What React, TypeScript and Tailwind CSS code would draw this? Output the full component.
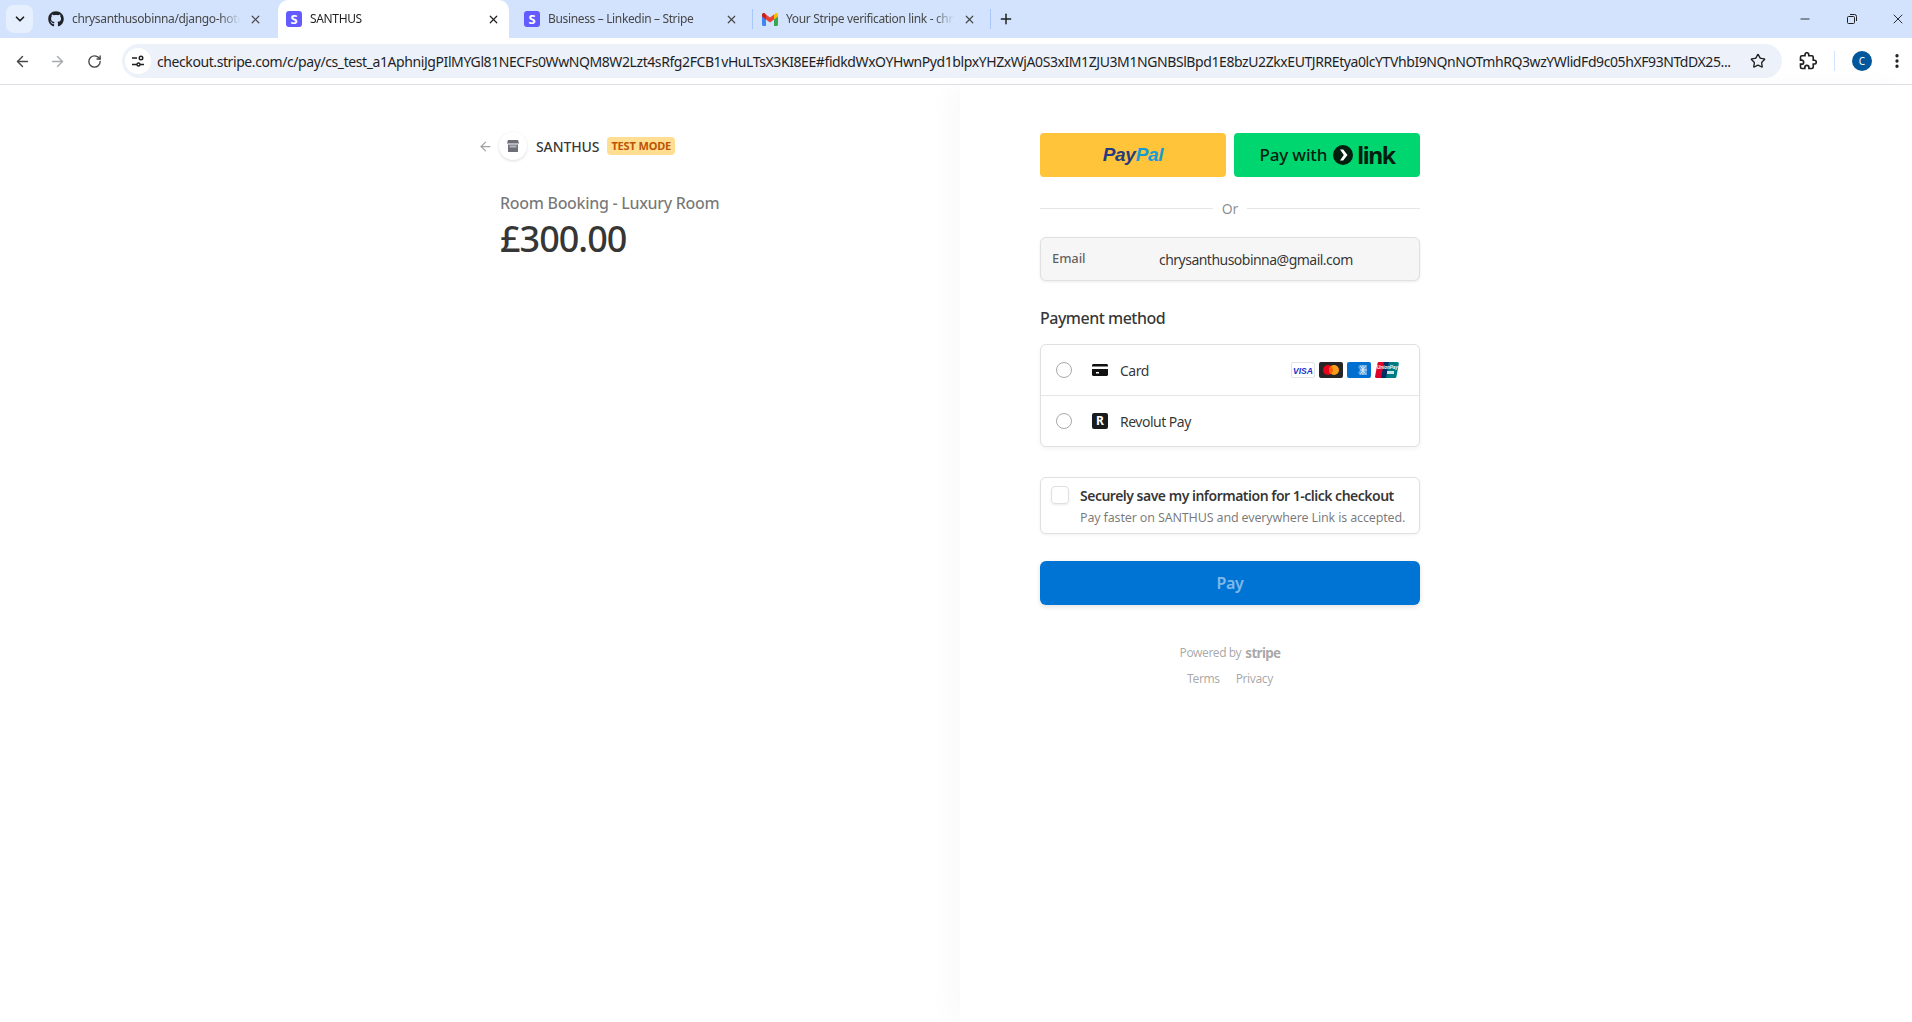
import React from "react";
import { ArrowLeft, ArrowRight, ChevronDown, EllipsisVertical, Minus, Plus, RotateCw, Star, X } from "lucide-react";
import { FaGithub } from "react-icons/fa";

const URL_TEXT =
  "checkout.stripe.com/c/pay/cs_test_a1AphniJgPIlMYGl81NECFs0WwNQM8W2Lzt4sRfg2FCB1vHuLTsX3KI8EE#fidkdWxOYHwnPyd1blpxYHZxWjA0S3xIM1ZJU3M1NGNBSlBpd1E8bzU2ZkxEUTJRREtya0lcYTVhbI9NQnNOTmhRQ3wzYWlidFd9c05hXF93NTdDX25...";

const StripeFavicon = () => (
  <span className="flex h-4 w-4 shrink-0 items-center justify-center rounded-[3px] bg-[#635bff] text-[13px] font-bold leading-none text-white">
    S
  </span>
);

const GmailIcon = () => (
  <svg width="16" height="13" viewBox="0 0 16 13" className="shrink-0">
    <path d="M0 2v9.5C0 12.3.7 13 1.5 13H4V6z" fill="#4285f4" />
    <path d="M16 2v9.5c0 .8-.7 1.5-1.500 1.500H12V6z" fill="#34a853" />
    <path d="M4 6.500V1.500L8 4.500l4-3v5L8 9.500z" fill="#ea4335" />
    <path d="M0 2c0-2 2-2.500 3-1.500l1 1V6.500L0 3.500z" fill="#c5221f" />
    <path d="M16 2c0-2-2-2.500-3-1.500l-1 1V6.500l4-3z" fill="#fbbc04" />
  </svg>
);

const Tab = ({
  icon,
  title,
  active,
  separator,
}: {
  icon: React.ReactNode;
  title: string;
  active?: boolean;
  separator?: boolean;
}) => (
  <div className="relative h-[38px] w-[238px] shrink-0">
    <div className={`flex h-full w-[231px] items-center pl-2 ${active ? "rounded-t-[10px] bg-white" : ""}`}>
      {icon}
      <span
        className={`ml-2 w-[168px] overflow-hidden whitespace-nowrap text-[12px] tracking-[-0.35px] [mask-image:linear-gradient(to_right,black_88%,transparent)] ${active ? "text-[#1f1f1f]" : "text-[#474747]"}`}
      >
        {title}
      </span>
      <span className="ml-auto mr-2 flex h-4 w-4 items-center justify-center">
        <X size={13} strokeWidth={2.2} className={active ? "text-[#1f1f1f]" : "text-[#474747]"} />
      </span>
    </div>
    {separator && <div className="absolute right-[1px] top-[9px] h-5 w-px bg-[#a8c7fa]" />}
  </div>
);

const TabStrip = () => (
  <div className="flex h-[38px] items-center bg-[#d3e3fd]">
    <div className="ml-[6px] mr-[7px] flex h-7 w-[27px] items-center justify-center rounded-lg bg-[#e6effd]">
      <ChevronDown size={14} strokeWidth={3} className="text-[#1f1f1f]" />
    </div>
    <Tab icon={<FaGithub size={16} className="shrink-0 text-[#1f2328]" />} title="chrysanthusobinna/django-hotel" />
    <Tab icon={<StripeFavicon />} title="SANTHUS" active />
    <Tab icon={<StripeFavicon />} title="Business – Linkedin – Stripe" separator />
    <Tab icon={<GmailIcon />} title="Your Stripe verification link - chrysanthus" separator />
    <Plus size={16} strokeWidth={2.2} className="ml-[6px] text-[#1f1f1f]" />
    <div className="ml-auto flex items-center text-[#1f1f1f]">
      <Minus size={14} strokeWidth={1.5} />
      <svg width="12" height="12" viewBox="0 0 12 12" fill="none" stroke="#1f1f1f" className="ml-[34px]">
        <rect x="1.500" y="3.500" width="7" height="7" rx="1" />
        <path d="M4 1.500h4.500a2 2 0 0 1 2 2V8" />
      </svg>
      <X size={16} strokeWidth={1.4} className="ml-[32px] mr-[6px]" />
    </div>
  </div>
);

const AddressBar = () => (
  <div className="flex h-[47px] items-center border-b border-[#dcdfe3] bg-white">
    <ArrowLeft size={17} strokeWidth={2} className="ml-[14px] text-[#474747]" />
    <ArrowRight size={17} strokeWidth={2} className="ml-[18px] text-[#a8abad]" />
    <RotateCw size={15} strokeWidth={2.2} className="ml-[21px] text-[#474747]" />
    <div className="ml-[20px] flex h-[34px] w-[1660px] items-center rounded-full bg-[#edf2fa] pl-[3px]">
      <div className="flex h-[26px] w-[26px] items-center justify-center rounded-full bg-white">
        <svg width="14" height="14" viewBox="0 0 14 14" fill="none" stroke="#1f1f1f" strokeWidth="1.400">
          <path d="M1 4h5M1 10.500h5M9 10.500h4" />
          <circle cx="10" cy="4" r="1.800" />
          <circle cx="7.500" cy="10.500" r="1.500" />
        </svg>
      </div>
      <span className="ml-[6px] w-[1575px] overflow-hidden whitespace-nowrap text-[14px] tracking-[-0.415px] text-[#1f1f1f]">
        {URL_TEXT}
      </span>
      <Star size={16} strokeWidth={2} className="ml-[18px] text-[#1f1f1f]" />
    </div>
    <svg width="18" height="18" viewBox="0 0 24 24" fill="none" stroke="#1f1f1f" strokeWidth="2.200" className="ml-[17px]">
      <path d="M20.500 11H19V7c0-1.100-.9-2-2-2h-4V3.500C13 2.120 11.880 1 10.500 1S8 2.120 8 3.500V5H4c-1.100 0-1.990.9-1.990 2v3.800H3.500c1.490 0 2.700 1.210 2.700 2.700s-1.210 2.700-2.700 2.700H2V20c0 1.100.9 2 2 2h3.800v-1.500c0-1.490 1.210-2.700 2.700-2.700 1.490 0 2.700 1.210 2.700 2.700V22H17c1.100 0 2-.9 2-2v-4h1.500c1.380 0 2.500-1.120 2.500-2.500S21.880 11 20.500 11z" />
    </svg>
    <div className="ml-[17px] h-5 w-px bg-[#d3e3fd]" />
    <div className="ml-[17px] flex h-5 w-5 items-center justify-center rounded-full bg-[#00579b] text-[10px] text-white">
      C
    </div>
    <EllipsisVertical size={18} strokeWidth={2.4} className="ml-[16px] text-[#1f1f1f]" />
  </div>
);

const VisaIcon = () => (
  <svg width="24" height="16" viewBox="0 0 24 16">
    <rect x=".5" y=".5" width="23" height="15" rx="1.500" fill="#fff" stroke="#e3e3e3" />
    <text x="12" y="11.500" textAnchor="middle" fontSize="8.500" fontWeight="800" fontStyle="italic" fill="#1434cb" fontFamily="'Liberation Sans', sans-serif">
      VISA
    </text>
  </svg>
);

const MastercardIcon = () => (
  <svg width="24" height="16" viewBox="0 0 24 16">
    <rect width="24" height="16" rx="2" fill="#252525" />
    <circle cx="9" cy="8" r="5" fill="#eb001b" />
    <circle cx="15" cy="8" r="5" fill="#f79e1b" />
    <path d="M12 4a5 5 0 0 1 0 8 5 5 0 0 1 0-8z" fill="#ff5f00" />
  </svg>
);

const AmexIcon = () => (
  <svg width="24" height="16" viewBox="0 0 24 16">
    <rect width="24" height="16" rx="2" fill="#016fd0" />
    <path d="M13 3h7v10h-7l-2-2 2-3-2-3z" fill="#fff" opacity=".35" />
    <path d="M13 3.500l3 4 3-4M13 12.500l3-4 3 4M13 8h7M16 3v10" stroke="#fff" strokeWidth=".7" fill="none" />
  </svg>
);

const UnionPayIcon = () => (
  <svg width="24" height="16" viewBox="0 0 24 16">
    <path d="M4 0h7L8 16H1.500C.5 16 0 15.300 0 14.500L2.500 1.500C2.700.5 3.200 0 4 0z" fill="#dd0228" />
    <path d="M9 0h7l-3 16H6z" fill="#002f65" />
    <path d="M14 0h8c1.200 0 2 .7 1.800 1.800L21.500 14.500c-.2 1-1 1.500-2 1.500H11z" fill="#007b84" />
    <text x="12.500" y="7" textAnchor="middle" fontSize="4.500" fontWeight="700" fontStyle="italic" fill="#fff" fontFamily="'Liberation Sans', sans-serif">
      UnionPay
    </text>
    <rect x="12" y="9" width="7" height="3" fill="#fff" opacity=".8" />
  </svg>
);

const Summary = () => (
  <div className="w-[960px] shrink-0 pl-[478px] pt-[47px]">
    <div className="flex h-7 items-center">
      <ArrowLeft size={15} strokeWidth={2} className="text-[#a3a3a3]" />
      <div className="ml-[6px] flex h-7 w-7 items-center justify-center rounded-full bg-white shadow-[0_1px_3px_rgba(0,0,0,0.14)]">
        <svg width="12" height="12" viewBox="0 0 12 12">
          <path d="M1 0h10l1 3.500H0z" fill="#6d6e78" />
          <path d="M1 4.500h10V12H1z" fill="#6d6e78" />
          <rect x="2.500" y="5.500" width="7" height="2" fill="#fff" opacity=".5" />
        </svg>
      </div>
      <span className="ml-[9px] text-[14px] font-medium tracking-[-0.1px] text-[#1a1a1ae6]">SANTHUS</span>
      <span className="ml-2 flex h-[18px] items-center rounded-[4px] bg-[#ffde92] px-1 text-[11px] font-bold tracking-[-0.15px] text-[#bb5504]">
        TEST MODE
      </span>
    </div>
    <div className="pl-[22px]">
      <div className="mt-[31px] text-[16px] font-medium leading-[24px] tracking-[-0.3px] text-[#1a1a1a99]">
        Room Booking - Luxury Room
      </div>
      <div className="mt-[2px] text-[36px] font-medium leading-[44px] tracking-[-1px] text-[#1a1a1ae6]">£300.00</div>
    </div>
  </div>
);

const ExpressButtons = () => (
  <div className="flex gap-2">
    <div className="flex h-11 w-[186px] items-center justify-center rounded-[4px] bg-[#ffc439] font-['Liberation_Sans',sans-serif] text-[19px] font-bold italic tracking-[-0.3px]">
      <span className="text-[#253b80]">Pay</span>
      <span className="text-[#179bd7]">Pal</span>
    </div>
    <div className="flex h-11 w-[186px] items-center justify-center rounded-[4px] bg-[#00d66f] text-[#011e0f]">
      <span className="text-[17px] font-medium tracking-[-0.15px]">Pay with</span>
      <svg width="20" height="20" viewBox="0 0 20 20" className="ml-[6px]">
        <circle cx="10" cy="10" r="10" fill="#011e0f" />
        <path d="M7 4.500h3.200L14.500 10l-4.300 5.500H7L10.800 10z" fill="#fff" />
      </svg>
      <span className="ml-[4px] text-[23px] font-bold leading-none tracking-[-1.4px]">link</span>
    </div>
  </div>
);

const PaymentMethods = () => (
  <div className="mt-[14px] overflow-hidden rounded-md border border-[#e0e0e0] bg-white shadow-[0_2px_4px_rgba(0,0,0,0.05)]">
    <div className="flex h-[51px] items-center border-b border-[#e6e6e6] pl-[15px] pr-[20px]">
      <span className="h-4 w-4 rounded-full border border-[#a8a8a8]" />
      <svg width="16" height="12" viewBox="0 0 16 12" className="ml-[20px]">
        <path d="M0 1.500C0 .7.700 0 1.500 0h13c.8 0 1.500.7 1.500 1.500V2.500H0zM0 5h16v5.500c0 .8-.7 1.500-1.500 1.500h-13C.7 12 0 11.300 0 10.500zm4 3v1.500h3V8z" fill="#111" />
      </svg>
      <span className="ml-3 text-[14px] tracking-[-0.5px] text-[#1a1a1ae6]">Card</span>
      <div className="ml-auto flex gap-1">
        <VisaIcon />
        <MastercardIcon />
        <AmexIcon />
        <UnionPayIcon />
      </div>
    </div>
    <div className="flex h-[50px] items-center pl-[15px]">
      <span className="h-4 w-4 rounded-full border border-[#a8a8a8]" />
      <span className="ml-[20px] flex h-4 w-4 items-center justify-center rounded-[2px] bg-[#191c1f] text-[12px] font-bold text-white">
        R
      </span>
      <span className="ml-3 text-[14px] tracking-[-0.5px] text-[#1a1a1ae6]">Revolut Pay</span>
    </div>
  </div>
);

const CheckoutForm = () => (
  <div className="flex-1 bg-white pl-[80px] pt-[48px] shadow-[-12px_0_24px_rgba(0,0,0,0.025)]">
    <div className="w-[380px]">
      <ExpressButtons />
      <div className="mt-[21px] flex h-[20px] items-center">
        <div className="h-px flex-1 bg-[#e6e6e6]" />
        <span className="mx-[9px] text-[14px] text-[#1a1a1a80]">Or</span>
        <div className="h-px flex-1 bg-[#e6e6e6]" />
      </div>
      <div className="mt-[19px] flex h-11 items-center rounded-md border border-[#e0e0e0] bg-[#f6f6f6] pl-[11px] text-[13px] shadow-[0_1px_3px_rgba(0,0,0,0.08)]">
        <span className="w-[107px] font-medium tracking-[-0.1px] text-[#1a1a1ab3]">Email</span>
        <span className="text-[14px] tracking-[-0.52px] text-[#1a1a1ae6]">chrysanthusobinna@gmail.com</span>
      </div>
      <div className="mt-[25px] text-[16px] font-medium leading-[24px] tracking-[-0.5px] text-[#1a1a1ae6]">Payment method</div>
      <PaymentMethods />
      <div className="mt-[30px] flex h-[57px] rounded-md border border-[#e0e0e0] bg-white pl-[10px] pt-2 shadow-[0_1px_3px_rgba(0,0,0,0.06)]">
        <span className="h-[18px] w-[18px] rounded-[4px] border border-[#e0e0e0] shadow-[0_1px_2px_rgba(0,0,0,0.08)]" />
        <div className="ml-[11px]">
          <div className="text-[14px] font-semibold leading-[20px] tracking-[-0.5px] text-[#1a1a1ae6]">
            Securely save my information for 1-click checkout
          </div>
          <div className="mt-[3px] text-[12.5px] leading-[18px] tracking-[-0.15px] text-[#1a1a1a99]">
            Pay faster on SANTHUS and everywhere Link is accepted.
          </div>
        </div>
      </div>
      <div className="mt-[27px] flex h-11 items-center justify-center rounded-md bg-[#0074d4] text-[16px] font-semibold tracking-[-0.3px] text-white/50 shadow-[0_2px_5px_rgba(0,0,0,0.12)]">
        Pay
      </div>
      <div className="mt-[38px] flex items-center justify-center text-[12px] tracking-[-0.4px] text-[#1a1a1a66]">
        Powered by
        <span className="ml-1 text-[13.5px] font-bold tracking-[-0.7px]">stripe</span>
      </div>
      <div className="mt-[7px] flex justify-center gap-4 text-[12px] tracking-[-0.4px] text-[#1a1a1a66]">
        <span>Terms</span>
        <span>Privacy</span>
      </div>
    </div>
  </div>
);

const App = () => {
  return (
    <div className="flex h-screen flex-col overflow-hidden bg-white font-['Noto_Sans',sans-serif]">
      <TabStrip />
      <AddressBar />
      <div className="flex flex-1">
        <Summary />
        <CheckoutForm />
      </div>
    </div>
  );
};

export default App;
